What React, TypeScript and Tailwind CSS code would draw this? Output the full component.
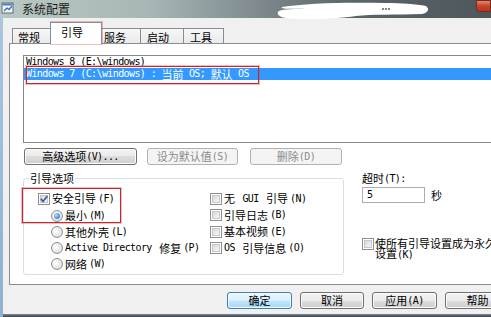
import React from "react";

const ASCII = /^[\x20-\x7e]+$/;
function T({ s }: { s: string }) {
  const parts = s.split(/([\x20-\x7e]+)/).filter(Boolean);
  return (
    <>
      {parts.map((p, i) =>
        ASCII.test(p) ? (
          <span key={i} className="font-['DejaVu_Sans_Mono',monospace] text-[10px] tracking-[-0.6px]">
            {p}
          </span>
        ) : (
          <span key={i}>{p}</span>
        )
      )}
    </>
  );
}

function Check({ checked }: { checked?: boolean }) {
  return (
    <span className="relative inline-flex w-[12px] h-[12px] shrink-0 border border-[#8e8f8f] bg-white p-[1px]">
      <span className="flex-1 border border-[#c3c7cc] bg-[linear-gradient(135deg,#d5d8dc,#f7f7f7)]" />
      {checked && (
        <svg className="absolute left-0 top-0" width="10" height="10" viewBox="0 0 10 10">
          <path d="M2 4.8 L4 7.4 L8.4 2" stroke="#3a55a0" strokeWidth="1.6" fill="none" />
        </svg>
      )}
    </span>
  );
}

function Radio({ on }: { on?: boolean }) {
  return (
    <span className="inline-flex items-center justify-center w-[12px] h-[12px] shrink-0 rounded-full border border-[#8e8f8f] bg-[radial-gradient(circle_at_40%_40%,#ffffff,#d2d5d9)]">
      {on && <span className="w-[6px] h-[6px] rounded-full bg-[radial-gradient(circle_at_35%_35%,#a8e4ff,#1a60b5)]" />}
    </span>
  );
}

function Btn({ s, className, kind }: { s: string; className: string; kind?: "default" | "disabled" }) {
  const base = "h-[17px] shrink-0 rounded-[3px] border flex items-center justify-center whitespace-pre leading-none ";
  const look =
    kind === "default"
      ? "border-[#3c7fb1] bg-[linear-gradient(#eaf6fd_0%,#d9f0fc_50%,#bee6fd_50%,#a7d9f5_100%)] shadow-[inset_0_0_0_1px_#f0faff] text-black "
      : kind === "disabled"
      ? "border-[#adb2b5] bg-[#f4f4f4] text-[#8a8a8a] "
      : "border-[#707070] bg-[linear-gradient(#f2f2f2_0%,#ebebeb_50%,#dddddd_50%,#cfcfcf_100%)] shadow-[inset_0_0_0_1px_#fbfbfb] text-black ";
  return (
    <div className={base + look + className}>
      <T s={s} />
    </div>
  );
}

export default function App() {
  return (
    <div className="relative w-[491px] h-[317px] overflow-hidden bg-[#f0f0f0] font-['Noto_Sans_CJK_SC',sans-serif] text-[11px] text-black leading-none">
      {/* title bar */}
      <div className="h-[18px] flex items-start bg-[linear-gradient(90deg,#b8c8c3_0%,#a8b7b6_30%,#838f93_50%,#5b6468_72%,#4e575b_100%)]">
        <svg className="mt-[2px] ml-[1px]" width="13" height="12" viewBox="0 0 13 12">
          <rect x="1" y="1" width="11" height="10" fill="#f4f6f8" stroke="#5a6a80" />
          <rect x="1.5" y="1.5" width="10" height="2" fill="#4f7fbf" />
          <path d="M3 9 L6 6 L8 7.5 L11 4" stroke="#2f6fc0" strokeWidth="1.3" fill="none" />
        </svg>
        <span className="ml-[8px] mt-[3px] text-[12px] text-[#1c1c1c]">系统配置</span>
        <div className="flex-1" />
        <div className="w-[15px] h-[12px] rounded-bl-[3px] border border-[#7a2a1c] bg-[linear-gradient(#e08a70,#c7432a_50%,#b8341e)]" />
      </div>

      <div className="flex h-[299px]">
        <div className="w-[3px] bg-[linear-gradient(#a9c6de,#8fb1cf)]" />
        <div className="flex-1 min-w-0 flex flex-col">
          {/* tabs */}
          <div className="mt-[5px] h-[21px] flex items-end pl-[9px]">
            <div className="w-[40px] h-[16px] border border-b-0 border-[#898c95] bg-[linear-gradient(#f7f7f7,#e9e9e9)] pl-[5px] pt-[3px] text-[11px]">常规</div>
            <div className="relative z-10 -mx-[2px] w-[52px] h-[22px] border border-b-0 border-[#898c95] bg-white pl-[10px] pt-[4px] text-[11px]">引导</div>
            <div className="w-[41px] h-[16px] border border-b-0 border-[#898c95] bg-[linear-gradient(#f7f7f7,#e9e9e9)] pl-[3px] pt-[3px]">服务</div>
            <div className="w-[43px] h-[16px] border border-b-0 border-l-0 border-[#898c95] bg-[linear-gradient(#f7f7f7,#e9e9e9)] pl-[6px] pt-[3px]">启动</div>
            <div className="w-[40px] h-[16px] border border-b-0 border-l-0 border-[#898c95] bg-[linear-gradient(#f7f7f7,#e9e9e9)] pl-[6px] pt-[3px]">工具</div>
          </div>

          {/* panel */}
          <div className="-mt-[1px] ml-[6px] w-[520px] h-[242px] shrink-0 border border-[#898c95] bg-white flex flex-col">
            <div className="ml-[13px] mt-[11px] w-[490px] h-[88px] shrink-0 border border-[#828790] bg-white flex flex-col whitespace-pre">
              <div className="h-[12px] flex items-center pl-[2px]">
                <T s="Windows 8 (E:\windows)" />
              </div>
              <div className="h-[12px] flex items-center pl-[2px] bg-[#3399ff] text-white">
                <T s="Windows 7 (C:\windows) : 当前 OS; 默认 OS" />
              </div>
            </div>

            <div className="mt-[5px] ml-[14px] flex">
              <Btn s="高级选项(V)..." className="w-[113px]" />
              <Btn s="设为默认值(S)" className="ml-[10px] w-[91px]" kind="disabled" />
              <Btn s="删除(D)" className="ml-[12px] w-[92px]" kind="disabled" />
            </div>

            <div className="mt-[7px] ml-[13px] flex items-start">
              <fieldset className="w-[321px] shrink-0 border border-[#d5dfe5] rounded-[3px] pb-[2px]">
                <legend className="ml-[5px] px-[1px] leading-[13px]">引导选项</legend>
                <div className="flex pt-[5px] whitespace-pre">
                  <div className="w-[186px] shrink-0 pl-[14px] flex flex-col">
                    <div className="h-[17px] flex items-center gap-[2px]">
                      <Check checked />
                      <T s="安全引导(F)" />
                    </div>
                    <div className="h-[17px] flex items-center gap-[2px] pl-[13px]">
                      <Radio on />
                      <T s="最小(M)" />
                    </div>
                    <div className="h-[16px] flex items-center gap-[2px] pl-[13px]">
                      <Radio />
                      <T s="其他外壳(L)" />
                    </div>
                    <div className="h-[16px] flex items-center gap-[2px] pl-[13px]">
                      <Radio />
                      <T s="Active Directory 修复(P)" />
                    </div>
                    <div className="h-[16px] flex items-center gap-[2px] pl-[13px]">
                      <Radio />
                      <T s="网络(W)" />
                    </div>
                  </div>
                  <div className="flex flex-col">
                    <div className="h-[17px] flex items-center gap-[2px]">
                      <Check />
                      <T s="无 GUI 引导(N)" />
                    </div>
                    <div className="h-[16px] flex items-center gap-[2px]">
                      <Check />
                      <T s="引导日志(B)" />
                    </div>
                    <div className="h-[17px] flex items-center gap-[2px]">
                      <Check />
                      <T s="基本视频(E)" />
                    </div>
                    <div className="h-[16px] flex items-center gap-[2px]">
                      <Check />
                      <T s="OS 引导信息(O)" />
                    </div>
                  </div>
                </div>
              </fieldset>

              <div className="ml-[18px] flex flex-col whitespace-pre">
                <div className="mt-[1px] h-[11px] flex items-center">
                  <T s="超时(T):" />
                </div>
                <div className="mt-[3px] flex items-center">
                  <div className="w-[63px] h-[16px] border border-[#abadb3] bg-white pl-[4px] flex items-center">
                    <T s="5" />
                  </div>
                  <span className="ml-[6px]">秒</span>
                </div>
                <div className="mt-[35px] flex items-start gap-[1px]">
                  <Check />
                  <div className="flex flex-col leading-[10px]">
                    <span>使所有引导设置成为永久</span>
                    <span>
                      <T s="设置(K)" />
                    </span>
                  </div>
                </div>
              </div>
            </div>
          </div>

          {/* footer */}
          <div className="mt-[7px] flex pl-[224px]">
            <Btn s="确定" className="w-[65px]" kind="default" />
            <Btn s="取消" className="ml-[8px] w-[64px]" />
            <Btn s="应用(A)" className="ml-[8px] w-[65px]" />
            <Btn s="帮助" className="ml-[8px] w-[65px]" />
          </div>
          <div className="flex-1" />
          <div className="h-[3px] bg-[linear-gradient(#7d8a92,#34424b)]" />
        </div>
      </div>

      {/* censor scribble */}
      <svg className="absolute left-[276px] top-[1px]" width="155" height="20" viewBox="0 0 155 20">
        <path
          d="M6 6 C30 2 70 1 110 2 C125 2 140 3 150 5 C154 8 152 12 146 13 C120 14 95 13 80 15 C60 18 30 19 10 17 C2 16 0 12 3 10 C8 8 20 8 30 8 C18 7 4 9 6 6 Z"
          fill="#ffffff"
        />
        <circle cx="107" cy="8" r="0.9" fill="#4a4f55" />
        <circle cx="110" cy="8" r="0.9" fill="#4a4f55" />
        <circle cx="113" cy="8" r="0.9" fill="#4a4f55" />
      </svg>

      {/* red annotation boxes */}
      <div className="absolute left-[51px] top-[22px] w-[51px] h-[22px] border border-[#c8262c] shadow-[0_0_0_1px_rgba(210,70,70,0.35)]" />
      <div className="absolute left-[26px] top-[66px] w-[233px] h-[18px] border border-[#c8262c] shadow-[0_0_0_1px_rgba(210,70,70,0.35)]" />
      <div className="absolute left-[22px] top-[188px] w-[99px] h-[35px] border border-[#c8262c] shadow-[0_0_0_1px_rgba(210,70,70,0.35)]" />
    </div>
  );
}
